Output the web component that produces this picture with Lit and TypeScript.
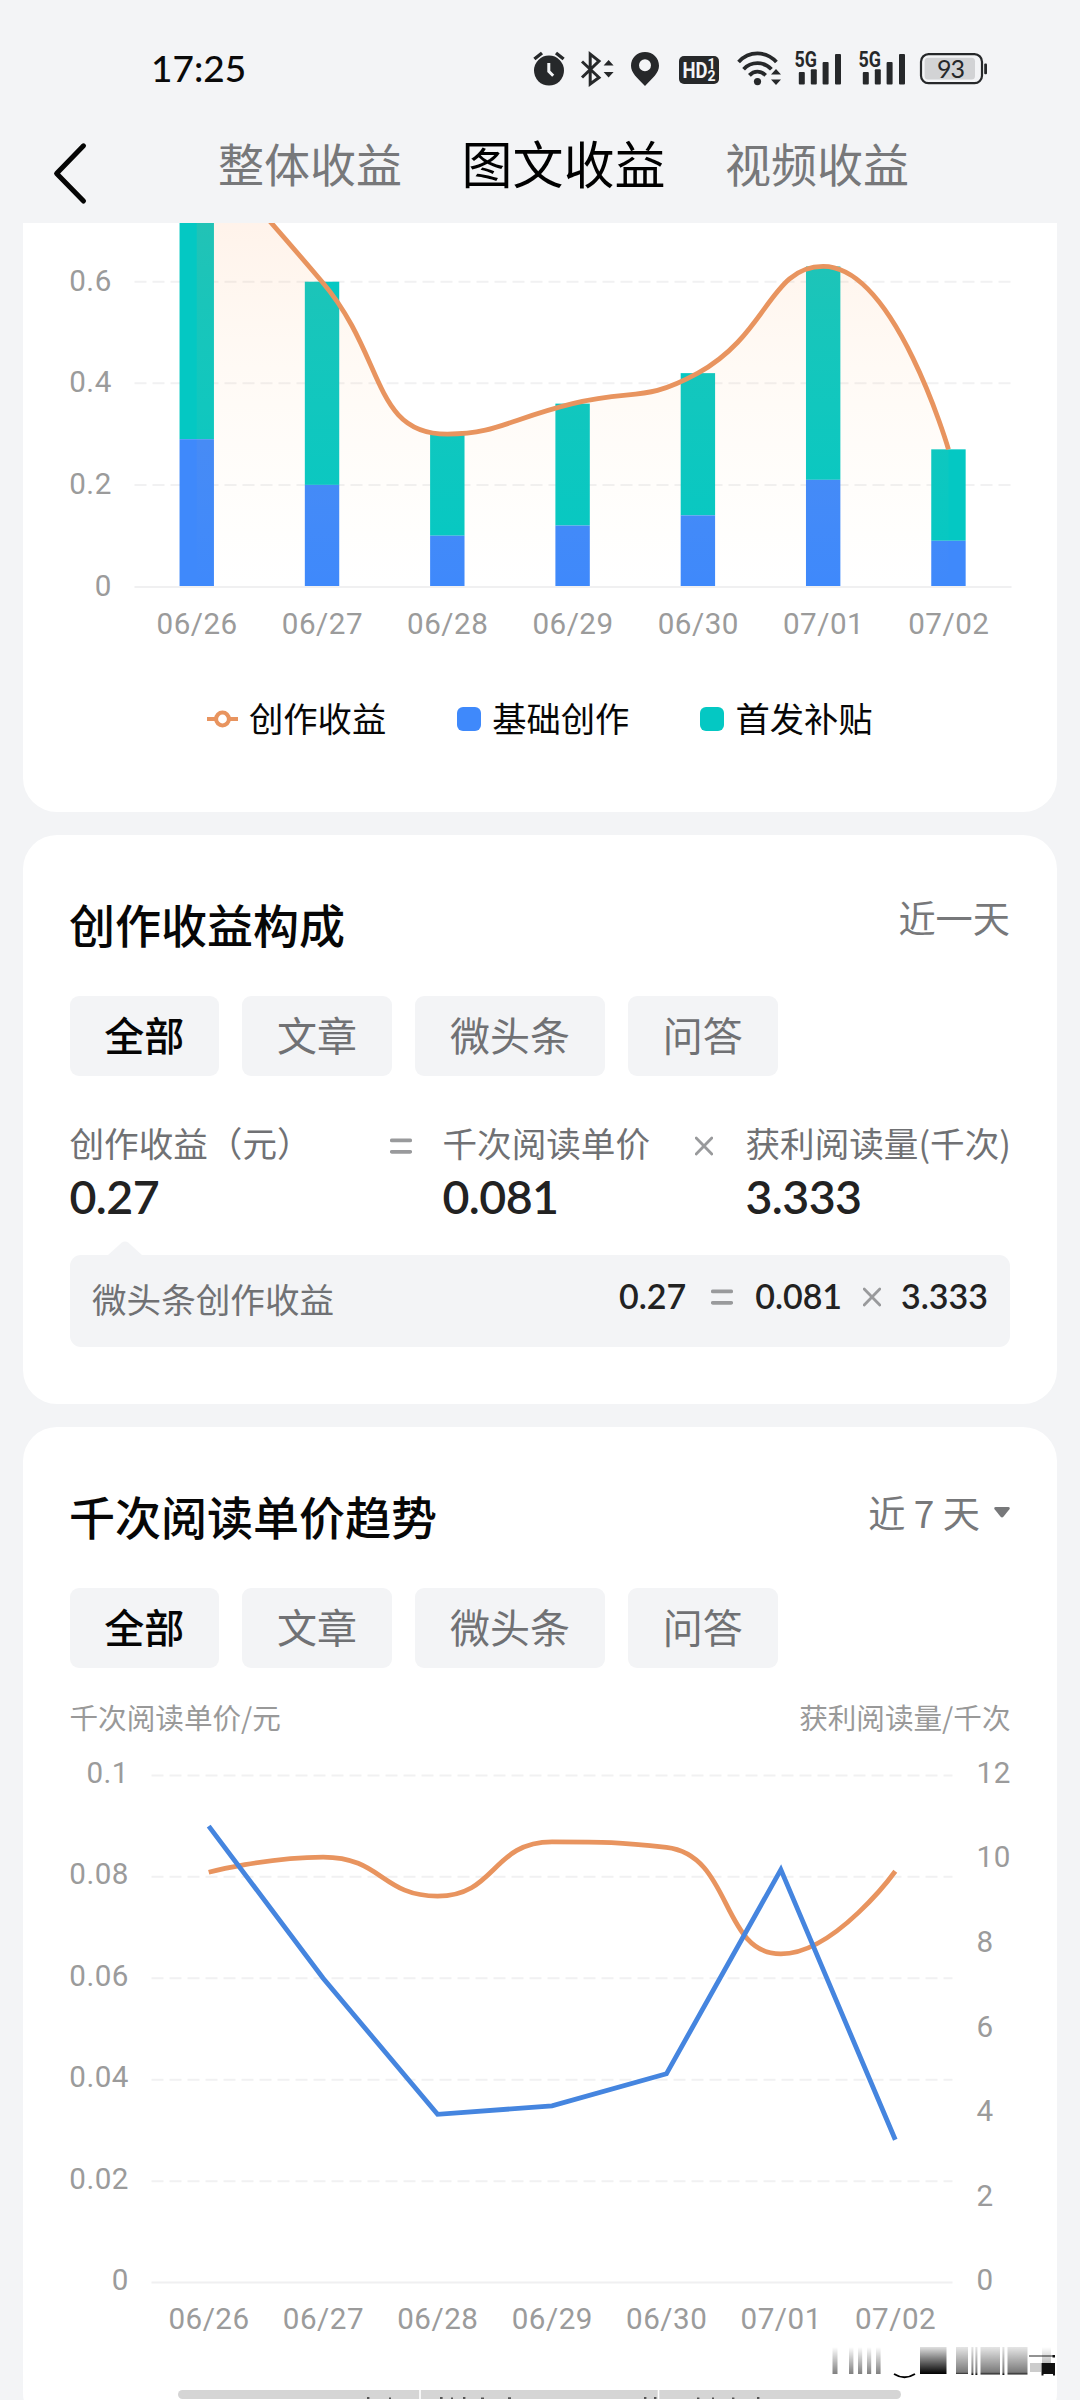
import { LitElement, html, svg, css } from "lit";
import { customElement, property } from "lit/decorators.js";

type Point = [number, number];

const DAYS = ["06/26", "06/27", "06/28", "06/29", "06/30", "07/01", "07/02"];

/** Bezier path through the points, with control points clamped to the neighbouring segments. */
function smoothPath(pts: Point[], smooth = 0.5): string {
  let d = `M${pts[0][0]},${pts[0][1]}`;
  let out: Point = pts[0];
  const clamp = (v: number, a: number, b: number) =>
    Math.max(Math.min(v, Math.max(a, b)), Math.min(a, b));
  for (let i = 1; i < pts.length; i++) {
    const [x, y] = pts[i];
    const prev = pts[i - 1];
    const next = pts[i + 1];
    let cp: Point = [x, y];
    let nextOut: Point = [x, y];
    if (next) {
      const lp = Math.hypot(x - prev[0], y - prev[1]);
      const ln = Math.hypot(next[0] - x, next[1] - y);
      const r = ln / (ln + lp);
      let nx = clamp(x + (next[0] - prev[0]) * smooth * r, next[0], x);
      let ny = clamp(y + (next[1] - prev[1]) * smooth * r, next[1], y);
      const cx = clamp(x - ((nx - x) * lp) / ln, prev[0], x);
      const cy = clamp(y - ((ny - y) * lp) / ln, prev[1], y);
      nx = x + ((x - cx) * ln) / lp;
      ny = y + ((y - cy) * ln) / lp;
      cp = [cx, cy];
      nextOut = [nx, ny];
    }
    d += `C${out[0]},${out[1]} ${cp[0]},${cp[1]} ${x},${y}`;
    out = nextOut;
  }
  return d;
}

const chartText = css`
  :host {
    display: block;
  }
  svg {
    display: block;
  }
  .tick {
    font: 400 29.6px Roboto, sans-serif;
    letter-spacing: 0.5px;
    fill: #9b9b9b;
  }
  .end {
    text-anchor: end;
  }
  .mid {
    text-anchor: middle;
  }
  .grid {
    stroke: #f1f1f2;
    stroke-width: 2;
    stroke-dasharray: 12 6;
  }
  .axis {
    stroke: #f0f0f1;
    stroke-width: 2;
  }
  .line {
    fill: none;
    stroke-width: 4.8;
    stroke: #e8945f;
  }
  .blue {
    stroke: #4585df;
  }
`;

@customElement("income-chart")
class IncomeChart extends LitElement {
  static styles = [
    chartText,
    css`
      .base {
        fill: #3f89fb;
      }
      .bonus {
        fill: #04c8c3;
      }
    `,
  ];

  private readonly rows = [
    [0.88, 0.29],
    [0.6, 0.2],
    [0.3, 0.1],
    [0.36, 0.12],
    [0.42, 0.14],
    [0.63, 0.21],
    [0.27, 0.09],
  ];

  render() {
    const left = 111.5;
    const right = 988.5;
    const zero = 363.5;
    const step = (right - left) / 7;
    const y = (v: number) => zero - v * 508;
    const x = (i: number) => left + step * (i + 0.5) - 0.4;
    const d = smoothPath(this.rows.map((r, i): Point => [x(i), y(r[0])]));
    return html`<svg width="1034" height="427" viewBox="0 0 1034 427">
      <defs>
        <linearGradient id="fade" gradientUnits="userSpaceOnUse" x1="0" y1=${y(0.88)} x2="0" y2=${zero}>
          <stop offset="0" stop-color="#ff8a4a" stop-opacity="0.15"></stop>
          <stop offset="0.5" stop-color="#ffb060" stop-opacity="0.065"></stop>
          <stop offset="1" stop-color="#ffc880" stop-opacity="0"></stop>
        </linearGradient>
      </defs>
      ${[0.6, 0.4, 0.2].map(
        (v) => svg`<line class="grid" x1=${left} x2=${right} y1=${y(v)} y2=${y(v)}></line>`
      )}
      <line class="axis" x1=${left} x2=${right} y1=${zero + 0.5} y2=${zero + 0.5}></line>
      ${this.rows.map(
        ([total, base], i) => svg`
          <rect class="bonus" x=${x(i) - 17.2} y=${y(total)} width="34.4" height=${y(base) - y(total)}></rect>
          <rect class="base" x=${x(i) - 17.2} y=${y(base)} width="34.4" height=${zero - 0.5 - y(base)}></rect>`
      )}
      <path d="${d}L${x(6)},${zero}L${x(0)},${zero}Z" fill="url(#fade)"></path>
      <path class="line" d=${d}></path>
      ${["0.6", "0.4", "0.2", "0"].map(
        (t) => svg`<text class="tick end" x="88.8" y=${y(+t) + 9}>${t}</text>`
      )}
      ${DAYS.map((t, i) => svg`<text class="tick mid" x=${x(i) + 0.4} y="410.5">${t}</text>`)}
    </svg>`;
  }
}

@customElement("price-chart")
class PriceChart extends LitElement {
  static styles = chartText;

  render() {
    const left = 128.5;
    const right = 929.5;
    const zero = 545.6;
    const h = 507.2;
    const step = (right - left) / 7;
    const x = (i: number) => left + step * (i + 0.5);
    const price = [0.0809, 0.0839, 0.0762, 0.0869, 0.0858, 0.0648, 0.0811];
    const reads = [10.8, 7.2, 3.98, 4.18, 4.94, 9.77, 3.38];
    const a = smoothPath(price.map((v, i): Point => [x(i), zero - v * 10 * h]));
    const b = reads.map((v, i) => `${x(i)},${zero - (v / 12) * h}`).join(" ");
    return html`<svg width="1034" height="607" viewBox="0 0 1034 607">
      ${["0.1", "0.08", "0.06", "0.04", "0.02", "0"].map((t) => {
        const y = zero - +t * 10 * h;
        return svg`
          <line class=${t === "0" ? "axis" : "grid"} x1=${left} x2=${right} y1=${y} y2=${y}></line>
          <text class="tick end" x="106" y=${y + 7.5}>${t}</text>`;
      })}
      ${[12, 10, 8, 6, 4, 2, 0].map(
        (t) => svg`<text class="tick" x="953.5" y=${zero - (t / 12) * h + 7.5}>${t}</text>`
      )}
      ${DAYS.map((t, i) => svg`<text class="tick mid" x=${x(i) + 0.3} y="592">${t}</text>`)}
      <path class="line" d=${a}></path>
      <polyline class="line blue" points=${b}></polyline>
    </svg>`;
  }
}

@customElement("filter-chips")
class FilterChips extends LitElement {
  static styles = css`
    :host {
      display: flex;
      gap: 23.5px;
    }
    .chip {
      box-sizing: border-box;
      height: 80px;
      padding: 0 34.7px 4px;
      border-radius: 9px;
      background: #f3f4f6;
      color: #707174;
      font-size: 40px;
      line-height: 76px;
      white-space: nowrap;
    }
    .on {
      color: #050505;
      font-weight: 500;
    }
  `;
  render() {
    return ["全部", "文章", "微头条", "问答"].map(
      (t, i) => html`<div class="chip ${i === 0 ? "on" : ""}">${t}</div>`
    );
  }
}

@customElement("math-sign")
class MathSign extends LitElement {
  static styles = css`
    :host {
      display: block;
    }
    svg {
      display: block;
      fill: none;
      stroke: #999a9c;
      stroke-linecap: round;
    }
  `;
  @property() kind = "equals";
  render() {
    return this.kind === "equals"
      ? html`<svg width="22" height="20" viewBox="0 0 22 20">
          <path d="M1.8 4.4h18.4M1.8 15.8h18.4" stroke-width="3.8"></path>
        </svg>`
      : html`<svg width="18" height="20" viewBox="0 0 18 20">
          <path d="M1.2 2l15.6 16M16.8 2L1.2 18" stroke-width="2.8"></path>
        </svg>`;
  }
}

@customElement("status-bar")
class StatusBar extends LitElement {
  static styles = css`
    :host {
      display: flex;
      flex: none;
      height: 100px;
      padding-left: 151px;
      font-family: Lato, "Noto Sans", sans-serif;
    }
    .time {
      width: 382px;
      padding-top: 37.5px;
      font-size: 37px;
      font-weight: 500;
      line-height: 60px;
      color: #0a0a0a;
    }
    .icons {
      display: flex;
      padding-top: 48px;
      color: #26282a;
    }
    svg {
      display: block;
      overflow: visible;
      fill: currentColor;
    }
    .ln {
      fill: none;
      stroke: currentColor;
    }
    .hand {
      fill: none;
      stroke: #f3f4f6;
    }
    .net {
      font: 700 21.5px "Roboto", sans-serif;
    }
    .hd {
      font: 700 21.5px "Roboto", sans-serif;
      fill: #f3f4f6;
    }
    .sub {
      font: 700 14px "Roboto", sans-serif;
      fill: #f3f4f6;
    }
    .pct {
      font: 400 25px Lato, sans-serif;
    }
  `;

  private signal(width: number) {
    return html`<svg width=${width} height="42" viewBox="0 0 ${width} 42">
      <text class="net" x="0.6" y="19.4" textLength="22.4" lengthAdjust="spacingAndGlyphs">5G</text>
      <rect x="4.8" y="24" width="6" height="12.4" rx="1"></rect>
      <rect x="16.8" y="21.2" width="6" height="15.2" rx="1"></rect>
      <rect x="28.6" y="14" width="6" height="22.4" rx="1"></rect>
      <rect x="41" y="6" width="6" height="30.4" rx="1"></rect>
    </svg>`;
  }

  render() {
    return html`
      <div class="time">17:25</div>
      <div class="icons">
        <svg width="48" height="42" viewBox="0 0 48 42">
          <circle cx="16" cy="22.6" r="15"></circle>
          <path class="ln" d="M1.4 11L9 5M30.6 11L23 5" stroke-width="3.4"></path>
          <path class="hand" d="M15.8 15v8.4l4.4 4.4" stroke-width="3"></path>
        </svg>
        <svg width="50" height="42" viewBox="0 0 50 42">
          <path class="ln" d="M1 13.5L18 29.5L9.2 36V6L18 13L1 29.5" stroke-width="3"></path>
          <path d="M22.6 17.5l5-5.4l5 5.4zM22.6 24l5 5.4l5-5.4z"></path>
        </svg>
        <svg width="46" height="42" viewBox="0 0 46 42">
          <path fill-rule="evenodd" d="M14 4C6 4 0 10 0 17.8C0 25 6 29.6 14 38C22 29.6 28 25 28 17.8C28 10 22 4 14 4zM14 11.2a6 6 0 1 1 0 12a6 6 0 1 1 0-12z"></path>
        </svg>
        <svg width="60" height="42" viewBox="0 0 60 42">
          <rect x="2" y="8" width="40" height="28" rx="5"></rect>
          <text class="hd" x="5.4" y="29.8" textLength="25" lengthAdjust="spacingAndGlyphs">HD</text>
          <text class="sub" x="30.6" y="21.4">1</text>
          <text class="sub" x="30.6" y="33">2</text>
        </svg>
        <svg width="57" height="42" viewBox="0 0 57 42">
          <path class="ln" d="M1.6 14C12 2.6 29 2.6 39.4 14M6.6 21.2C14 13.2 27 13.2 34.4 21.2M12.4 27.4C17 22.4 24 22.4 28.6 27.4" stroke-width="3.8"></path>
          <circle cx="20.5" cy="33.6" r="3.6"></circle>
          <path d="M34 26.4l5-5.4l5 5.4zM34 31.6l5 5.4l5-5.4z"></path>
        </svg>
        ${this.signal(64)} ${this.signal(62)}
        <svg width="68" height="42" viewBox="0 0 68 42">
          <rect class="ln" x="1" y="6.2" width="61" height="29" rx="7.5" stroke-width="2.2"></rect>
          <rect x="4.6" y="9.8" width="50.4" height="21.8" rx="3.5" fill="#d2d3d5"></rect>
          <rect x="64.2" y="15.4" width="2.8" height="10.8" rx="1"></rect>
          <text class="pct" x="17" y="29.6" textLength="28">93</text>
        </svg>
      </div>
    `;
  }
}

@customElement("app-root")
class AppRoot extends LitElement {
  static styles = css`
    :host {
      display: flex;
      flex-direction: column;
      position: relative;
      box-sizing: border-box;
      width: 1080px;
      height: 2400px;
      overflow: hidden;
      background: #f3f4f6;
      font-family: "Noto Sans CJK SC", sans-serif;
      color: #070707;
    }
    svg {
      display: block;
    }
    .nav {
      display: flex;
      flex: none;
      align-items: center;
      height: 123px;
    }
    .back {
      width: 218px;
      padding-top: 23px;
    }
    .back svg {
      margin-left: 52px;
    }
    .tabs {
      display: flex;
      align-items: center;
      gap: 59.5px;
      font-size: 46px;
      line-height: 70px;
      color: #77787a;
    }
    .active {
      font-size: 51px;
      color: #000;
    }
    .feed {
      display: flex;
      flex: none;
      flex-direction: column;
      gap: 23px;
      padding: 0 23px;
    }
    .card {
      box-sizing: border-box;
      border-radius: 34px;
      background: #fff;
    }
    .first {
      height: 589px;
      border-radius: 0 0 34px 34px;
    }
    .legend {
      display: flex;
      justify-content: flex-start;
      gap: 70.5px;
      padding: 42px 0 0 183.5px;
      font-size: 34.3px;
      line-height: 50px;
    }
    .key {
      display: flex;
      align-items: center;
      gap: 11.5px;
    }
    .swatch {
      width: 24px;
      height: 24px;
      margin-top: 4px;
      border-radius: 6px;
    }
    .ring {
      margin-top: 4px;
    }
    .s-base {
      background: #3f89fb;
    }
    .s-bonus {
      background: #04c8c3;
    }
    .make {
      height: 569px;
    }
    .trend {
      height: 1000px;
    }
    .head {
      display: flex;
      justify-content: space-between;
      height: 68px;
      padding: 54px 47px 39px 46px;
    }
    .title {
      font-size: 46px;
      font-weight: 500;
      line-height: 68px;
    }
    .range {
      display: flex;
      align-items: center;
      gap: 14px;
      height: 56px;
      font-size: 37.2px;
      line-height: 56px;
      color: #77787a;
    }
    .pick {
      margin-top: 3px;
    }
    filter-chips {
      margin-left: 46.5px;
    }
    .formula {
      display: grid;
      grid-template-columns: 320px 53px 252px 51px auto;
      align-items: start;
      margin: 44px 0 0 46.5px;
      white-space: nowrap;
    }
    .name {
      font-size: 34.6px;
      line-height: 44px;
      color: #707174;
    }
    .sign {
      padding-top: 15.5px;
    }
    .value {
      margin-top: 2px;
      font: 600 46.5px/60px Lato, sans-serif;
      letter-spacing: -0.6px;
      color: #222;
    }
    .bubble {
      position: relative;
      display: flex;
      align-items: center;
      justify-content: space-between;
      box-sizing: border-box;
      height: 92px;
      margin: 29px 47px 0 46.5px;
      padding: 0 22px 6px 22.5px;
      border-radius: 11px;
      background: #f3f4f6;
    }
    .notch {
      position: absolute;
      left: 37px;
      top: -14px;
    }
    .sum {
      display: flex;
      align-items: center;
      padding-bottom: 4px;
      font: 600 34px/44px Lato, sans-serif;
      color: #222;
    }
    .eq {
      margin: 2px 22px 0 25px;
    }
    .mul {
      margin: 2px 20px 0 21px;
    }
    .units {
      display: flex;
      justify-content: space-between;
      padding: 29px 46.5px 0;
      font-size: 28.6px;
      line-height: 40px;
      color: #999;
    }
    .slider {
      margin: 46px 0 0 155px;
    }
    .smudge {
      position: absolute;
      left: 828px;
      top: 2344px;
    }
  `;

  render() {
    return html`
      <status-bar></status-bar>
      <div class="nav">
        <div class="back">
          <svg width="38" height="64" viewBox="0 0 38 64" fill="none" stroke="#050505" stroke-width="5" stroke-linecap="round" stroke-linejoin="round">
            <path d="M31.5 4.8L4.6 32.4L31.5 60"></path>
          </svg>
        </div>
        <div class="tabs">
          <div>整体收益</div>
          <div class="active">图文收益</div>
          <div>视频收益</div>
        </div>
      </div>
      <div class="feed">
        <section class="card first">
          <income-chart></income-chart>
          <div class="legend">
            <div class="key">
              <svg class="ring" width="31" height="20" viewBox="0 0 31 20" fill="none" stroke="#e8945f" stroke-width="4">
                <path d="M0 10h9M22 10h9"></path>
                <circle cx="15.5" cy="10" r="6.4"></circle>
              </svg>
              创作收益
            </div>
            <div class="key"><i class="swatch s-base"></i>基础创作</div>
            <div class="key"><i class="swatch s-bonus"></i>首发补贴</div>
          </div>
        </section>

        <section class="card make">
          <div class="head">
            <div class="title">创作收益构成</div>
            <div class="range">近一天</div>
          </div>
          <filter-chips></filter-chips>
          <div class="formula">
            <div>
              <div class="name">创作收益（元）</div>
              <div class="value">0.27</div>
            </div>
            <math-sign class="sign"></math-sign>
            <div>
              <div class="name">千次阅读单价</div>
              <div class="value">0.081</div>
            </div>
            <math-sign class="sign" kind="times"></math-sign>
            <div>
              <div class="name">获利阅读量(千次)</div>
              <div class="value">3.333</div>
            </div>
          </div>
          <div class="bubble">
            <svg class="notch" width="36" height="15" viewBox="0 0 36 15">
              <path d="M0 15L14.6 1.8Q18 -1 21.4 1.8L36 15Z" fill="#f3f4f6"></path>
            </svg>
            <div class="name">微头条创作收益</div>
            <div class="sum">
              0.27<math-sign class="eq"></math-sign>0.081<math-sign class="mul" kind="times"></math-sign>3.333
            </div>
          </div>
        </section>

        <section class="card trend">
          <div class="head">
            <div class="title">千次阅读单价趋势</div>
            <div class="range pick">
              近 7 天
              <svg width="16" height="11" viewBox="0 0 16 11">
                <path d="M1.5 0h13Q16.6 .4 15.4 2.2L9.4 9.8Q8 11.4 6.6 9.8L.6 2.2Q-.6 .4 1.5 0Z" fill="#77787a"></path>
              </svg>
            </div>
          </div>
          <filter-chips></filter-chips>
          <div class="units"><span>千次阅读单价/元</span><span>获利阅读量/千次</span></div>
          <price-chart></price-chart>
          <svg class="slider" width="723" height="9" viewBox="0 0 723 9">
            <rect width="723" height="9" rx="4.5" fill="#d5d5d5"></rect>
            <path d="M242 0v9M480.5 0v9" stroke="#fff" stroke-width="1.6"></path>
            <path d="M189 8h2.400M211 8.400h2M262 8h2.600M273 8.400h2M285 8h2.400M303 8.400h3M330 8.200h3M466 8h2.400M476 8h2.400M519 8.400h2.400M534 8.400h2M554 8.400h2.400M579 8h2.400" stroke="#555" stroke-width="1.800"></path>
          </svg>
        </section>
      </div>
      <svg class="smudge" width="230" height="36" viewBox="0 0 230 36">
        <defs>
          <linearGradient id="soft" x1="0" y1="0" x2="0" y2="1">
            <stop offset="0" stop-color="#000" stop-opacity="0"></stop>
            <stop offset="1" stop-color="#000" stop-opacity="0.5"></stop>
          </linearGradient>
          <linearGradient id="mid" x1="0" y1="0" x2="0" y2="1">
            <stop offset="0" stop-color="#000" stop-opacity="0.1"></stop>
            <stop offset="0.9" stop-color="#000" stop-opacity="0.52"></stop>
            <stop offset="1" stop-color="#000"></stop>
          </linearGradient>
          <linearGradient id="hard" x1="0" y1="0" x2="0" y2="1">
            <stop offset="0" stop-color="#000" stop-opacity="0.12"></stop>
            <stop offset="1" stop-color="#000"></stop>
          </linearGradient>
        </defs>
        <path fill="url(#soft)" d="M4.5 3h5v27h-5zM21 3h4.4v27H21zM30 3h4.2v27H30zM39 3h4.2v27H39zM48 3h4.6v27H48z"></path>
        <path d="M66 30Q76.500 36.500 87 30" fill="none" stroke="#000" stroke-width="1.800"></path>
        <path fill="url(#hard)" d="M92 3h26.500v27H92z"></path>
        <path fill="url(#mid)" d="M128 3h12v27h-12zM143.400 3h2v28h-2zM147.400 3h2v28h-2zM152.500 3h19.500v27.500h-19.500zM174.400 3h2v28h-2zM179.500 3h20v27.500h-20z"></path>
        <path d="M201 12h26" stroke="#777" stroke-width="1.600"></path>
        <path d="M202 19h11v9h-11z" fill="#ccc"></path>
        <path d="M214 3h9v16h-9z" fill="url(#soft)" opacity="0.5"></path>
        <path d="M213.500 19h13.500v12.500h-2V30h-9.500v1.500h-2zM224.500 11h2.500v2.500h-2.500z" fill="#111"></path>
      </svg>
    `;
  }
}
